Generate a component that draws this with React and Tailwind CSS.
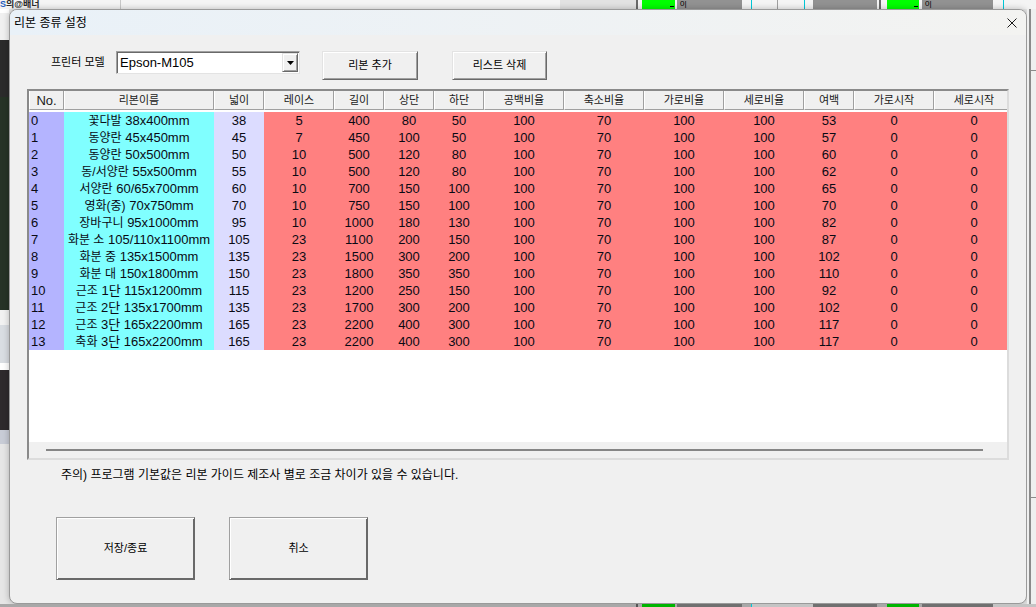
import React from "react";

const FONT = "font-['Liberation_Sans','Noto_Sans_CJK_KR',sans-serif]";

const cols = [
  { h: "No.", w: "w-[35px]", bg: "bg-[#b4b4ff]", left: true },
  { h: "리본이름", w: "w-[150px]", bg: "bg-[#80ffff]" },
  { h: "넓이", w: "w-[50px]", bg: "bg-[#dcdcff]" },
  { h: "레이스", w: "w-[70px]", bg: "bg-[#ff8080]" },
  { h: "길이", w: "w-[50px]", bg: "bg-[#ff8080]" },
  { h: "상단", w: "w-[50px]", bg: "bg-[#ff8080]" },
  { h: "하단", w: "w-[50px]", bg: "bg-[#ff8080]" },
  { h: "공백비율", w: "w-[80px]", bg: "bg-[#ff8080]" },
  { h: "축소비율", w: "w-[80px]", bg: "bg-[#ff8080]" },
  { h: "가로비율", w: "w-[80px]", bg: "bg-[#ff8080]" },
  { h: "세로비율", w: "w-[80px]", bg: "bg-[#ff8080]" },
  { h: "여백", w: "w-[50px]", bg: "bg-[#ff8080]" },
  { h: "가로시작", w: "w-[80px]", bg: "bg-[#ff8080]" },
  { h: "세로시작", w: "w-[80px]", bg: "bg-[#ff8080]" },
];

const rows = [
  [0, "꽃다발 38x400mm", 38, 5, 400, 80, 50, 100, 70, 100, 100, 53, 0, 0],
  [1, "동양란 45x450mm", 45, 7, 450, 100, 50, 100, 70, 100, 100, 57, 0, 0],
  [2, "동양란 50x500mm", 50, 10, 500, 120, 80, 100, 70, 100, 100, 60, 0, 0],
  [3, "동/서양란 55x500mm", 55, 10, 500, 120, 80, 100, 70, 100, 100, 62, 0, 0],
  [4, "서양란 60/65x700mm", 60, 10, 700, 150, 100, 100, 70, 100, 100, 65, 0, 0],
  [5, "영화(중) 70x750mm", 70, 10, 750, 150, 100, 100, 70, 100, 100, 70, 0, 0],
  [6, "장바구니 95x1000mm", 95, 10, 1000, 180, 130, 100, 70, 100, 100, 82, 0, 0],
  [7, "화분 소 105/110x1100mm", 105, 23, 1100, 200, 150, 100, 70, 100, 100, 87, 0, 0],
  [8, "화분 중 135x1500mm", 135, 23, 1500, 300, 200, 100, 70, 100, 100, 102, 0, 0],
  [9, "화분 대 150x1800mm", 150, 23, 1800, 350, 350, 100, 70, 100, 100, 110, 0, 0],
  [10, "근조 1단 115x1200mm", 115, 23, 1200, 250, 150, 100, 70, 100, 100, 92, 0, 0],
  [11, "근조 2단 135x1700mm", 135, 23, 1700, 300, 200, 100, 70, 100, 100, 102, 0, 0],
  [12, "근조 3단 165x2200mm", 165, 23, 2200, 400, 300, 100, 70, 100, 100, 117, 0, 0],
  [13, "축화 3단 165x2200mm", 165, 23, 2200, 400, 300, 100, 70, 100, 100, 117, 0, 0],
];

function Name({ s }) {
  const m = s.match(/^(.*?) (\d.*)$/);
  if (!m) return s;
  return (
    <>
      <span className="text-[12px]">{m[1]}</span> {m[2]}
    </>
  );
}

function TopStrip() {
  return (
    <div className="flex h-[9px] w-[1036px] shrink-0 overflow-hidden bg-[#f4f4f4]">
      <div className="flex w-[120px] shrink-0 items-end text-[9px] font-bold leading-[9px] text-[#2a2a2a]">
        <span className="text-[#1f5fbf]">S</span>
        <span>의@배너</span>
      </div>
      <div className="w-px shrink-0 bg-[#c8c8c8]" />
      <div className="w-[439px] shrink-0" />
      <div className="w-[76px] shrink-0 bg-[#e2e2e2]" />
      <div className="w-[2px] shrink-0 bg-[#6a6a6a]" />
      <div className="w-[4px] shrink-0" />
      <div className="flex w-[33px] shrink-0 items-end justify-end bg-[#00ff00] pb-[2px] pr-[1px]">
        <div className="h-px w-[4px] bg-black" />
      </div>
      <div className="w-[2px] shrink-0" />
      <div className="flex w-[65px] shrink-0 items-start bg-[#929292] pl-[3px] text-[8px] leading-[8px] text-black">0|</div>
      <div className="w-[9px] shrink-0" />
      <div className="w-px shrink-0 bg-[#00c8d8]" />
      <div className="w-[25px] shrink-0" />
      <div className="w-px shrink-0 bg-[#a0a0a0]" />
      <div className="w-[26px] shrink-0" />
      <div className="w-px shrink-0 bg-[#00c8d8]" />
      <div className="w-[8px] shrink-0" />
      <div className="w-[64px] shrink-0 bg-[#929292]" />
      <div className="w-[2px] shrink-0" />
      <div className="w-[2px] shrink-0 bg-[#6a6a6a]" />
      <div className="w-[6px] shrink-0" />
      <div className="flex w-[32px] shrink-0 items-end justify-end bg-[#00ff00] pb-[2px] pr-[1px]">
        <div className="h-px w-[4px] bg-black" />
      </div>
      <div className="w-[3px] shrink-0" />
      <div className="flex w-[71px] shrink-0 items-start bg-[#929292] pl-[3px] text-[8px] leading-[8px] text-black">0|</div>
      <div className="w-[10px] shrink-0" />
      <div className="w-px shrink-0 bg-[#00c8d8]" />
    </div>
  );
}

function BottomStrip() {
  return (
    <div className="flex h-[3px] w-[1036px] shrink-0 bg-[#a8a8a8]">
      <div className="w-[636px] shrink-0" />
      <div className="w-[2px] shrink-0 bg-[#555555]" />
      <div className="w-[4px] shrink-0" />
      <div className="w-[33px] shrink-0 bg-[#00b400]" />
      <div className="w-[2px] shrink-0" />
      <div className="w-[65px] shrink-0 bg-[#707070]" />
      <div className="w-[9px] shrink-0" />
      <div className="w-px shrink-0 bg-[#00c8d8]" />
      <div className="w-[61px] shrink-0 bg-[#c4c4c4]" />
      <div className="w-[64px] shrink-0 bg-[#707070]" />
      <div className="w-[10px] shrink-0" />
      <div className="w-[32px] shrink-0 bg-[#00b400]" />
      <div className="w-[3px] shrink-0" />
      <div className="w-[71px] shrink-0 bg-[#707070]" />
      <div className="flex-1 bg-[#c4c4c4]" />
    </div>
  );
}

function LeftStrip() {
  return (
    <div className="flex w-[9px] shrink-0 flex-col">
      <div className="h-[4px] bg-white" />
      <div className="h-[27px] bg-[#f0f0f0]" />
      <div className="h-[57px] bg-[#2b2b2b]" />
      <div className="h-[213px] bg-[#263326]" />
      <div className="h-[15px] bg-[#f2f2f2]" />
      <div className="h-[38px] bg-[#d9dde2]" />
      <div className="h-[7px] bg-white" />
      <div className="h-[60px] bg-[#2e2a2c]" />
      <div className="h-[14px] bg-[#c8ccd6]" />
      <div className="flex-1 bg-[#e6e6e6]" />
    </div>
  );
}

function RightStrip() {
  return (
    <div className="flex w-[9px] shrink-0 bg-[#efefef]">
      <div className="w-[2px] shrink-0" />
      <div className="w-[2px] shrink-0 bg-[#8a8a8a]" />
      <div className="flex flex-1 flex-col">
        <div className="h-[61px]" />
        <div className="h-px bg-[#8a8a8a]" />
        <div className="h-[426px]" />
        <div className="h-px bg-[#8a8a8a]" />
      </div>
    </div>
  );
}

function SmallButton({ children, w }) {
  return (
    <button
      className={`${w} flex h-[29px] items-center justify-center border border-t-[#e3e3e3] border-l-[#e3e3e3] border-r-[#696969] border-b-[#696969] bg-[#f0f0f0] text-[11px] text-black shadow-[inset_1px_1px_0_#ffffff,inset_-1px_-1px_0_#a0a0a0]`}
    >
      {children}
    </button>
  );
}

function BigButton({ children }) {
  return (
    <button className="flex h-[63px] w-[139px] items-center justify-center border border-t-[#a0a0a0] border-l-[#a0a0a0] border-r-[#696969] border-b-[#696969] bg-[#f0f0f0] text-[11px] text-black shadow-[inset_1px_1px_0_#ffffff,inset_-1px_-1px_0_#696969]">
      {children}
    </button>
  );
}

function Grid() {
  return (
    <div className="ml-[17px] mt-[9px] flex h-[371px] w-[982px] flex-col overflow-hidden border-2 border-t-[#8a8a8a] border-l-[#8a8a8a] border-r-[#dcdcdc] border-b-[#dcdcdc] bg-white">
      <div className="flex h-[19px] shrink-0 bg-[#f0f0f0]">
        {cols.map((c, i) => (
          <div
            key={i}
            className={`${c.w} flex h-[19px] shrink-0 items-center justify-center border-b border-r border-l border-b-[#a0a0a0] border-r-[#a0a0a0] border-l-white ${i === 0 ? "text-[13px]" : "text-[11px]"} leading-[17px] text-[#1a1a1a]`}
          >
            {c.h}
          </div>
        ))}
      </div>
      <div className="h-[2px] shrink-0 bg-white" />
      <div className="flex shrink-0 flex-col">
        {rows.map((r, ri) => (
          <div key={ri} className="flex h-[17px]">
            {r.map((v, ci) => (
              <div
                key={ci}
                className={`${cols[ci].w} ${cols[ci].bg} h-[17px] shrink-0 whitespace-nowrap text-[13px] leading-[17px] text-[#0a0a14] ${cols[ci].left ? "pl-[2px] text-left" : "text-center"}`}
              >
                {ci === 1 ? <Name s={v} /> : v}
              </div>
            ))}
          </div>
        ))}
      </div>
      <div className="flex-1 bg-white" />
      <div className="flex h-[16px] shrink-0 items-center bg-[#f0f0f0]">
        <div className="ml-[17px] h-[2px] w-[937px] bg-[#858585]" />
      </div>
    </div>
  );
}

function Dialog() {
  return (
    <div className="flex h-[595px] w-[1018px] shrink-0 flex-col overflow-hidden rounded-[8px] border border-[#9a9a9a] bg-[#f0f0f0] shadow-[0_0_6px_rgba(0,0,0,0.25)]">
      <div className="flex h-[25px] shrink-0 items-center justify-between bg-gradient-to-r from-[#e9f1f8] to-[#f3f3f1] pl-[4px]">
        <span className="text-[12px] leading-[14px] text-black">리본 종류 설정</span>
        <svg className="mr-[9px]" width="10" height="10" viewBox="0 0 10 10">
          <path d="M0.5 0.5 L9.5 9.5 M9.5 0.5 L0.5 9.5" stroke="#1a1a1a" strokeWidth="1" fill="none" />
        </svg>
      </div>

      <div className="mt-[16px] flex items-start pl-[41px]">
        <div className="flex h-[23px] w-[59px] items-center whitespace-nowrap text-[11px] text-black">
          프린터 모델
        </div>
        <div className="ml-[6px] flex h-[23px] w-[184px] items-center justify-between border border-t-[#a0a0a0] border-l-[#a0a0a0] border-r-[#e3e3e3] border-b-[#e3e3e3] bg-white shadow-[inset_1px_1px_0_#696969]">
          <span className="pl-[3px] text-[13px] leading-[16px] text-black">Epson-M105</span>
          <div className="mr-[1px] flex h-[19px] w-[16px] items-center justify-center border border-t-[#e3e3e3] border-l-[#e3e3e3] border-r-[#696969] border-b-[#696969] bg-[#f0f0f0] shadow-[inset_1px_1px_0_#ffffff,inset_-1px_-1px_0_#a0a0a0]">
            <svg width="7" height="4" viewBox="0 0 7 4">
              <path d="M0 0 H7 L3.5 4 Z" fill="#000" />
            </svg>
          </div>
        </div>
        <div className="ml-[22px]">
          <SmallButton w="w-[96px]">리본 추가</SmallButton>
        </div>
        <div className="ml-[34px]">
          <SmallButton w="w-[95px]">리스트 삭제</SmallButton>
        </div>
      </div>

      <Grid />

      <div className="ml-[51px] mt-[8px] whitespace-nowrap text-[12px] leading-[14px] text-black">
        주의) 프로그램 기본값은 리본 가이드 제조사 별로 조금 차이가 있을 수 있습니다.
      </div>

      <div className="ml-[46px] mt-[35px] flex gap-[34px]">
        <BigButton>저장/종료</BigButton>
        <BigButton>취소</BigButton>
      </div>
    </div>
  );
}

export default function App() {
  return (
    <div className={`flex h-[607px] w-[1036px] flex-col overflow-hidden bg-[#e6e6e6] ${FONT}`}>
      <TopStrip />
      <div className="flex h-[595px] shrink-0">
        <LeftStrip />
        <Dialog />
        <RightStrip />
      </div>
      <BottomStrip />
    </div>
  );
}
